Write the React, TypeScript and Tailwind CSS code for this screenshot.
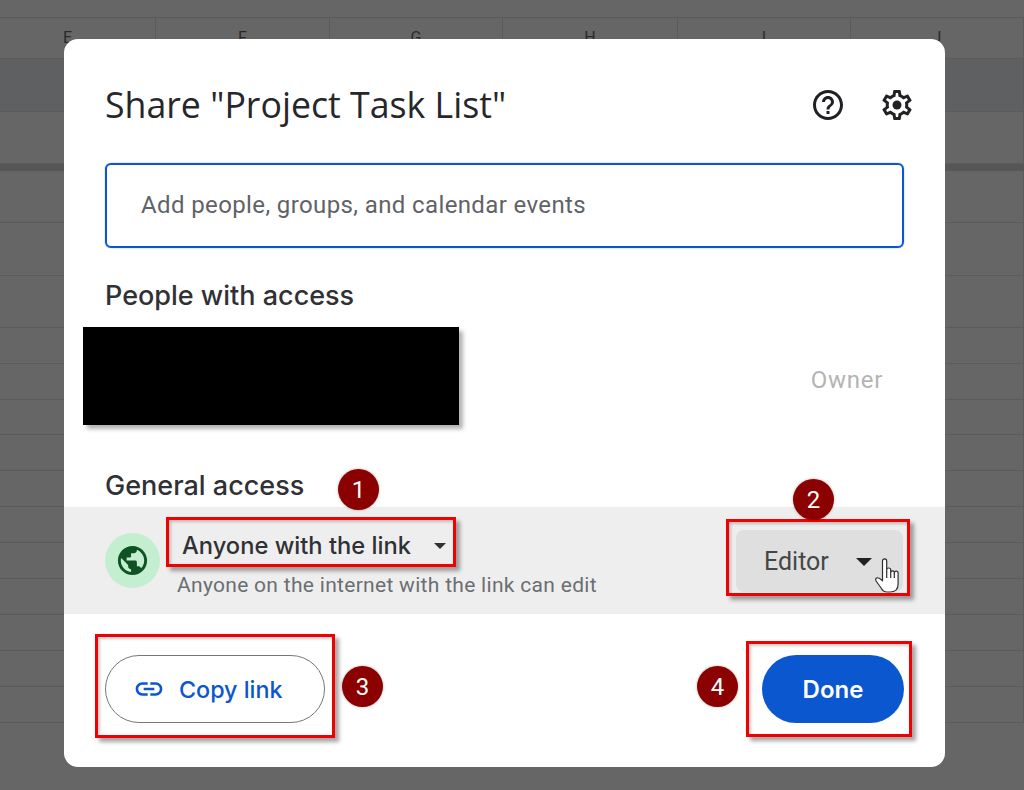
const COLS = [156, 174, 173, 175, 173, 173];
const LETTERS = ["E", "F", "G", "H", "I", "J"];
const BODY_ROWS = [52, 53, 52, 36, 36, 35, 36, 36, 36, 36, 36, 36, 36, 36];

function SheetRow({ height, tint }: { height: number; tint?: boolean }) {
  return (
    <div
      className={`flex border-b border-[#5b5b5b] ${tint ? "bg-[#5e6062]" : ""}`}
      style={{ height }}
    >
      {COLS.map((w, i) => (
        <div key={i} className="border-r border-[#5b5b5b]" style={{ width: w }} />
      ))}
    </div>
  );
}

function Sheet() {
  return (
    <div className="flex flex-col">
      <div className="h-[18px] border-b border-[#5b5b5b]" />
      <div className="flex h-[41px] border-b border-[#5b5b5b] text-[16px] text-[#2a2a2a]">
        {COLS.map((w, i) => (
          <div
            key={i}
            className={`flex items-center justify-center border-r border-[#5b5b5b] ${i === 0 ? "pr-[20px]" : ""}`}
            style={{ width: w }}
          >
            {LETTERS[i]}
          </div>
        ))}
      </div>
      <SheetRow height={53} tint />
      <SheetRow height={52} />
      <div className="h-[7px] bg-[#565656]" />
      {BODY_ROWS.map((h, i) => (
        <SheetRow key={i} height={h} />
      ))}
    </div>
  );
}

function Caret({ className }: { className: string }) {
  return (
    <svg viewBox="0 0 12 6" className={className} fill="currentColor">
      <path d="M0 0h12L6 6z" />
    </svg>
  );
}

function HelpIcon() {
  return (
    <svg viewBox="0 0 24 24" className="h-[36px] w-[36px]" fill="#202124">
      <path d="M11 18h2v-2h-2v2zm1-16C6.48 2 2 6.48 2 12s4.48 10 10 10 10-4.48 10-10S17.52 2 12 2zm0 18c-4.41 0-8-3.59-8-8s3.59-8 8-8 8 3.59 8 8-3.59 8-8 8zm0-14c-2.21 0-4 1.79-4 4h2c0-1.1.9-2 2-2s2 .9 2 2c0 2-3 1.75-3 5h2c0-2.25 3-2.5 3-5 0-2.21-1.79-4-4-4z" />
    </svg>
  );
}

function GearIcon() {
  return (
    <svg viewBox="0 0 24 24" className="h-[36px] w-[36px]" fill="#202124">
      <path d="M19.43 12.98c.04-.32.07-.64.07-.98 0-.34-.03-.66-.07-.98l2.11-1.65c.19-.15.24-.42.12-.64l-2-3.46c-.09-.16-.26-.25-.44-.25-.06 0-.12.01-.17.03l-2.49 1c-.52-.4-1.08-.73-1.69-.98l-.38-2.65C14.46 2.18 14.25 2 14 2h-4c-.25 0-.46.18-.49.42l-.38 2.65c-.61.25-1.17.59-1.69.98l-2.49-1c-.06-.02-.12-.03-.18-.03-.17 0-.34.09-.43.25l-2 3.46c-.13.22-.07.49.12.64l2.11 1.65c-.04.32-.07.65-.07.98 0 .33.03.66.07.98l-2.11 1.65c-.19.15-.24.42-.12.64l2 3.46c.09.16.26.25.44.25.06 0 .12-.01.17-.03l2.49-1c.52.4 1.08.73 1.69.98l.38 2.65c.03.24.24.42.49.42h4c.25 0 .46-.18.49-.42l.38-2.65c.61-.25 1.17-.59 1.69-.98l2.49 1c.06.02.12.03.18.03.17 0 .34-.09.43-.25l2-3.46c.12-.22.07-.49-.12-.64l-2.11-1.65zm-1.98-1.71c.04.31.05.52.05.73 0 .21-.02.43-.05.73l-.14 1.13.89.7 1.08.84-.7 1.21-1.27-.51-1.04-.42-.9.68c-.43.32-.84.56-1.25.73l-1.06.43-.16 1.13-.2 1.35h-1.4l-.19-1.35-.16-1.13-1.06-.43c-.43-.18-.83-.41-1.23-.71l-.91-.7-1.06.43-1.27.51-.7-1.21 1.08-.84.89-.7-.14-1.13c-.03-.31-.05-.54-.05-.74s.02-.43.05-.73l.14-1.13-.89-.7-1.08-.84.7-1.21 1.27.51 1.04.42.9-.68c.43-.32.84-.56 1.25-.73l1.06-.43.16-1.13.2-1.35h1.39l.19 1.35.16 1.13 1.06.43c.43.18.83.41 1.23.71l.91.7 1.06-.43 1.27-.51.7 1.21-1.07.85-.89.7.14 1.13z" />
      <circle cx="12" cy="12" r="3" />
    </svg>
  );
}

function GlobeIcon() {
  return (
    <svg viewBox="0 0 24 24" className="h-[35px] w-[35px]" fill="#0f5223">
      <path d="M12 2C6.48 2 2 6.48 2 12s4.48 10 10 10 10-4.48 10-10S17.52 2 12 2zm-1 17.93c-3.95-.49-7-3.85-7-7.93 0-.62.08-1.21.21-1.79L9 15v1c0 1.1.9 2 2 2v1.93zm6.9-2.54c-.26-.81-1-1.39-1.9-1.39h-1v-3c0-.55-.45-1-1-1H8v-2h2c.55 0 1-.45 1-1V7h2c1.1 0 2-.9 2-2v-.41c2.93 1.19 5 4.06 5 7.41 0 2.08-.8 3.97-2.1 5.39z" />
    </svg>
  );
}

function LinkIcon() {
  return (
    <svg viewBox="0 0 24 24" className="h-[32px] w-[32px]" fill="#0b57d0">
      <path d="M3.9 12c0-1.71 1.39-3.1 3.1-3.1h4V7H7c-2.76 0-5 2.24-5 5s2.24 5 5 5h4v-1.9H7c-1.71 0-3.1-1.39-3.1-3.1zM8 13h8v-2H8v2zm9-6h-4v1.9h4c1.71 0 3.1 1.39 3.1 3.1s-1.39 3.1-3.1 3.1h-4V17h4c2.76 0 5-2.24 5-5s-2.24-5-5-5z" />
    </svg>
  );
}

function HandCursor() {
  return (
    <svg
      viewBox="0 0 26 36"
      className="absolute left-[811px] top-[518px] h-[36px] w-[26px]"
      fill="white"
      stroke="#2f2f2f"
      strokeWidth="1.2"
      strokeLinejoin="round"
    >
      <path d="M7.5 20V4a2.1 2.1 0 0 1 4.2 0v10v-1a2 2 0 0 1 4 0v2a2 2 0 0 1 3.6 0v1a1.9 1.9 0 0 1 3.8 0v11q0 8-8 8h-3q-4 0-6-4l-5-7q-1.2-2.600 1-3.200q2-.3 5.400 3z" />
      <path d="M11.700 14v7M15.700 15v6M19.300 16v5" fill="none" />
    </svg>
  );
}

function Badge({ n, className }: { n: number; className: string }) {
  return (
    <div
      className={`absolute flex h-[41px] w-[41px] items-center justify-center rounded-full bg-[#8b0000] text-[24px] text-white shadow-[0_0_3px_rgba(0,0,0,0.3)] ${className}`}
    >
      {n}
    </div>
  );
}

function RedBox({ className }: { className: string }) {
  return (
    <div
      className={`absolute border-[3px] border-[#f00000] shadow-[4px_4px_4px_rgba(0,0,0,0.35),inset_2px_2px_3px_rgba(0,0,0,0.2)] ${className}`}
    />
  );
}

export default function App() {
  return (
    <div
      className="relative h-[790px] w-[1024px] overflow-hidden bg-[#666666]"
      style={{ fontFamily: "Roboto, sans-serif" }}
    >
      <Sheet />

      <div className="absolute left-[64px] top-[39px] flex h-[728px] w-[881px] flex-col rounded-[14px] bg-white">
        <div className="mt-[36px] flex h-[60px] items-center justify-between pl-[41px] pr-[30px]">
          <h1
            className="text-[35.7px] font-normal text-[#26272a]"
            style={{ fontFamily: "'Open Sans', sans-serif" }}
          >
            Share "Project Task List"
          </h1>
          <div className="flex items-center gap-[33px]">
            <HelpIcon />
            <GearIcon />
          </div>
        </div>

        <div className="mx-[41px] mt-[28px] flex h-[85px] w-[799px] items-center rounded-[6px] border-2 border-[#0b57d0] pb-[2px] pl-[34px] text-[24px] tracking-[0.38px] text-[#5f6368] shadow-[0_0_1px_#0b57d0]">
          Add people, groups, and calendar events
        </div>

        <div
          className="ml-[41px] mt-[27px] flex h-[40px] items-center pt-[2px] text-[27px] font-medium text-[#303134]"
          style={{ fontFamily: "Inter, sans-serif" }}
        >
          People with access
        </div>

        <div className="mt-[12px] flex h-[98px] items-center justify-between pl-[19px] pr-[62px]">
          <div className="h-[98px] w-[376px] bg-black shadow-[4px_4px_4px_rgba(0,0,0,0.3)]" />
          <span className="pt-[8px] text-[24px] tracking-[0.7px] text-[#b4b4b4]">Owner</span>
        </div>

        <div
          className="ml-[41px] mt-[40px] flex h-[40px] items-center pt-[2px] text-[27px] font-medium text-[#303134]"
          style={{ fontFamily: "Inter, sans-serif" }}
        >
          General access
        </div>

        <div className="mt-[2px] flex h-[107px] items-center bg-[#eeeeee] pl-[41px] pr-[42px]">
          <div className="flex h-[55px] w-[55px] items-center justify-center rounded-full bg-[#c4eed0]">
            <GlobeIcon />
          </div>
          <div className="ml-[17px] flex-1 self-start pt-[20px]">
            <div
              className="flex h-[36px] items-center pl-[5px] pt-[1px] text-[23.7px] font-medium text-[#303134]"
              style={{ fontFamily: "Inter, sans-serif" }}
            >
              Anyone with the link
              <Caret className="ml-[23px] h-[6px] w-[12px] text-[#303134]" />
            </div>
            <div className="mt-[9px] flex h-[28px] items-center text-[21px] tracking-[0.3px] text-[#6b6e72]">
              Anyone on the internet with the link can edit
            </div>
          </div>
          <div className="flex h-[62px] w-[167px] items-center rounded-[8px] bg-[#dfdfdf] pl-[28px] pt-[2px] text-[25px] text-[#444746]">
            Editor
            <Caret className="ml-[26px] h-[8px] w-[18px] text-[#202124]" />
          </div>
        </div>

        <div className="mt-[41px] flex h-[68px] items-center justify-between pl-[41px] pr-[41px]">
          <div
            className="flex h-[68px] w-[220px] items-center gap-[14px] rounded-full border border-[#777777] pl-[27px] text-[23.3px] font-medium text-[#0b57d0]"
            style={{ fontFamily: "Inter, sans-serif" }}
          >
            <LinkIcon />
            <span className="pt-[2px]">Copy link</span>
          </div>
          <div
            className="flex h-[68px] w-[142px] items-center justify-center rounded-full bg-[#0b57d0] pt-[2px] text-[24px] font-semibold text-white"
            style={{ fontFamily: "Inter, sans-serif" }}
          >
            Done
          </div>
        </div>

        <RedBox className="left-[102px] top-[478px] h-[50px] w-[290px]" />
        <RedBox className="left-[662px] top-[480px] h-[77px] w-[184px]" />
        <RedBox className="left-[31px] top-[595px] h-[104px] w-[240px]" />
        <RedBox className="left-[682px] top-[602px] h-[96px] w-[166px]" />

        <Badge n={1} className="left-[274px] top-[430px]" />
        <Badge n={2} className="left-[729px] top-[440px]" />
        <Badge n={3} className="left-[278px] top-[627px]" />
        <Badge n={4} className="left-[633px] top-[627px]" />

        <HandCursor />
      </div>
    </div>
  );
}
